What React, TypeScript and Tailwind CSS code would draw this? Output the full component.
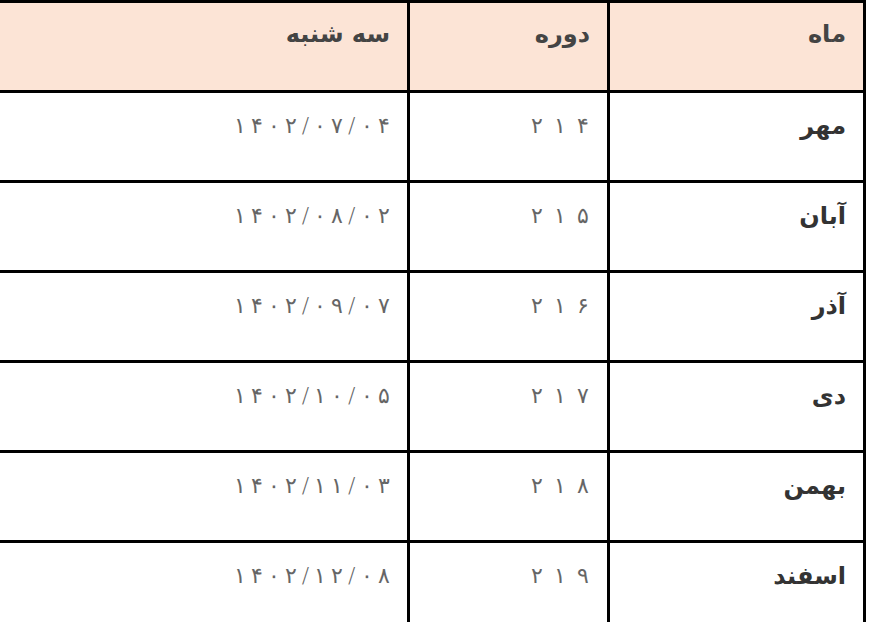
const rows = [
  { month: "مهر", period: "۲۱۴", date: "۱۴۰۲/۰۷/۰۴" },
  { month: "آبان", period: "۲۱۵", date: "۱۴۰۲/۰۸/۰۲" },
  { month: "آذر", period: "۲۱۶", date: "۱۴۰۲/۰۹/۰۷" },
  { month: "دی", period: "۲۱۷", date: "۱۴۰۲/۱۰/۰۵" },
  { month: "بهمن", period: "۲۱۸", date: "۱۴۰۲/۱۱/۰۳" },
  { month: "اسفند", period: "۲۱۹", date: "۱۴۰۲/۱۲/۰۸" },
];

// Chrome ignores letter-spacing on Arabic-script digits, so space them one by one
function Spaced({ text, pad }: { text: string; pad: string }) {
  return (
    <span dir="ltr" className="inline-flex">
      {text.split("").map((c, i) => (
        <span key={i} className={pad}>
          {c}
        </span>
      ))}
    </span>
  );
}

export default function App() {
  return (
    <div className="w-[869px] h-[622px] overflow-hidden bg-white font-['DejaVu_Sans',sans-serif]">
      <table dir="rtl" className="w-[866px] border-collapse table-fixed">
        <colgroup>
          <col className="w-[256px]" />
          <col className="w-[200px]" />
          <col />
        </colgroup>
        <thead>
          <tr className="bg-[#fce4d6] h-[90px] text-[24px] leading-[28px] font-bold text-[#444]">
            <th className="border-[3px] border-black text-right align-top pt-[17px] pr-[17px]">ماه</th>
            <th className="border-[3px] border-black text-right align-top pt-[17px] pr-[17px]">دوره</th>
            <th className="border-[3px] border-l-0 border-black text-right align-top pt-[17px] pr-[17px]">سه شنبه</th>
          </tr>
        </thead>
        <tbody>
          {rows.map((r) => (
            <tr key={r.month} className="h-[90px] leading-[28px]">
              <td className="border-[3px] border-black text-right align-top pt-[19px] pr-[17px] text-[24px] font-bold text-[#333]">{r.month}</td>
              <td className="border-[3px] border-black text-right align-top pt-[19px] pr-[13px] text-[22px] font-extralight text-[#666]">
                <Spaced text={r.period} pad="px-[5.5px]" />
              </td>
              <td className="border-[3px] border-l-0 border-black text-right align-top pt-[19px] pr-[15px] text-[22px] font-extralight text-[#666]">
                <Spaced text={r.date} pad="px-[2.5px]" />
              </td>
            </tr>
          ))}
        </tbody>
      </table>
    </div>
  );
}
